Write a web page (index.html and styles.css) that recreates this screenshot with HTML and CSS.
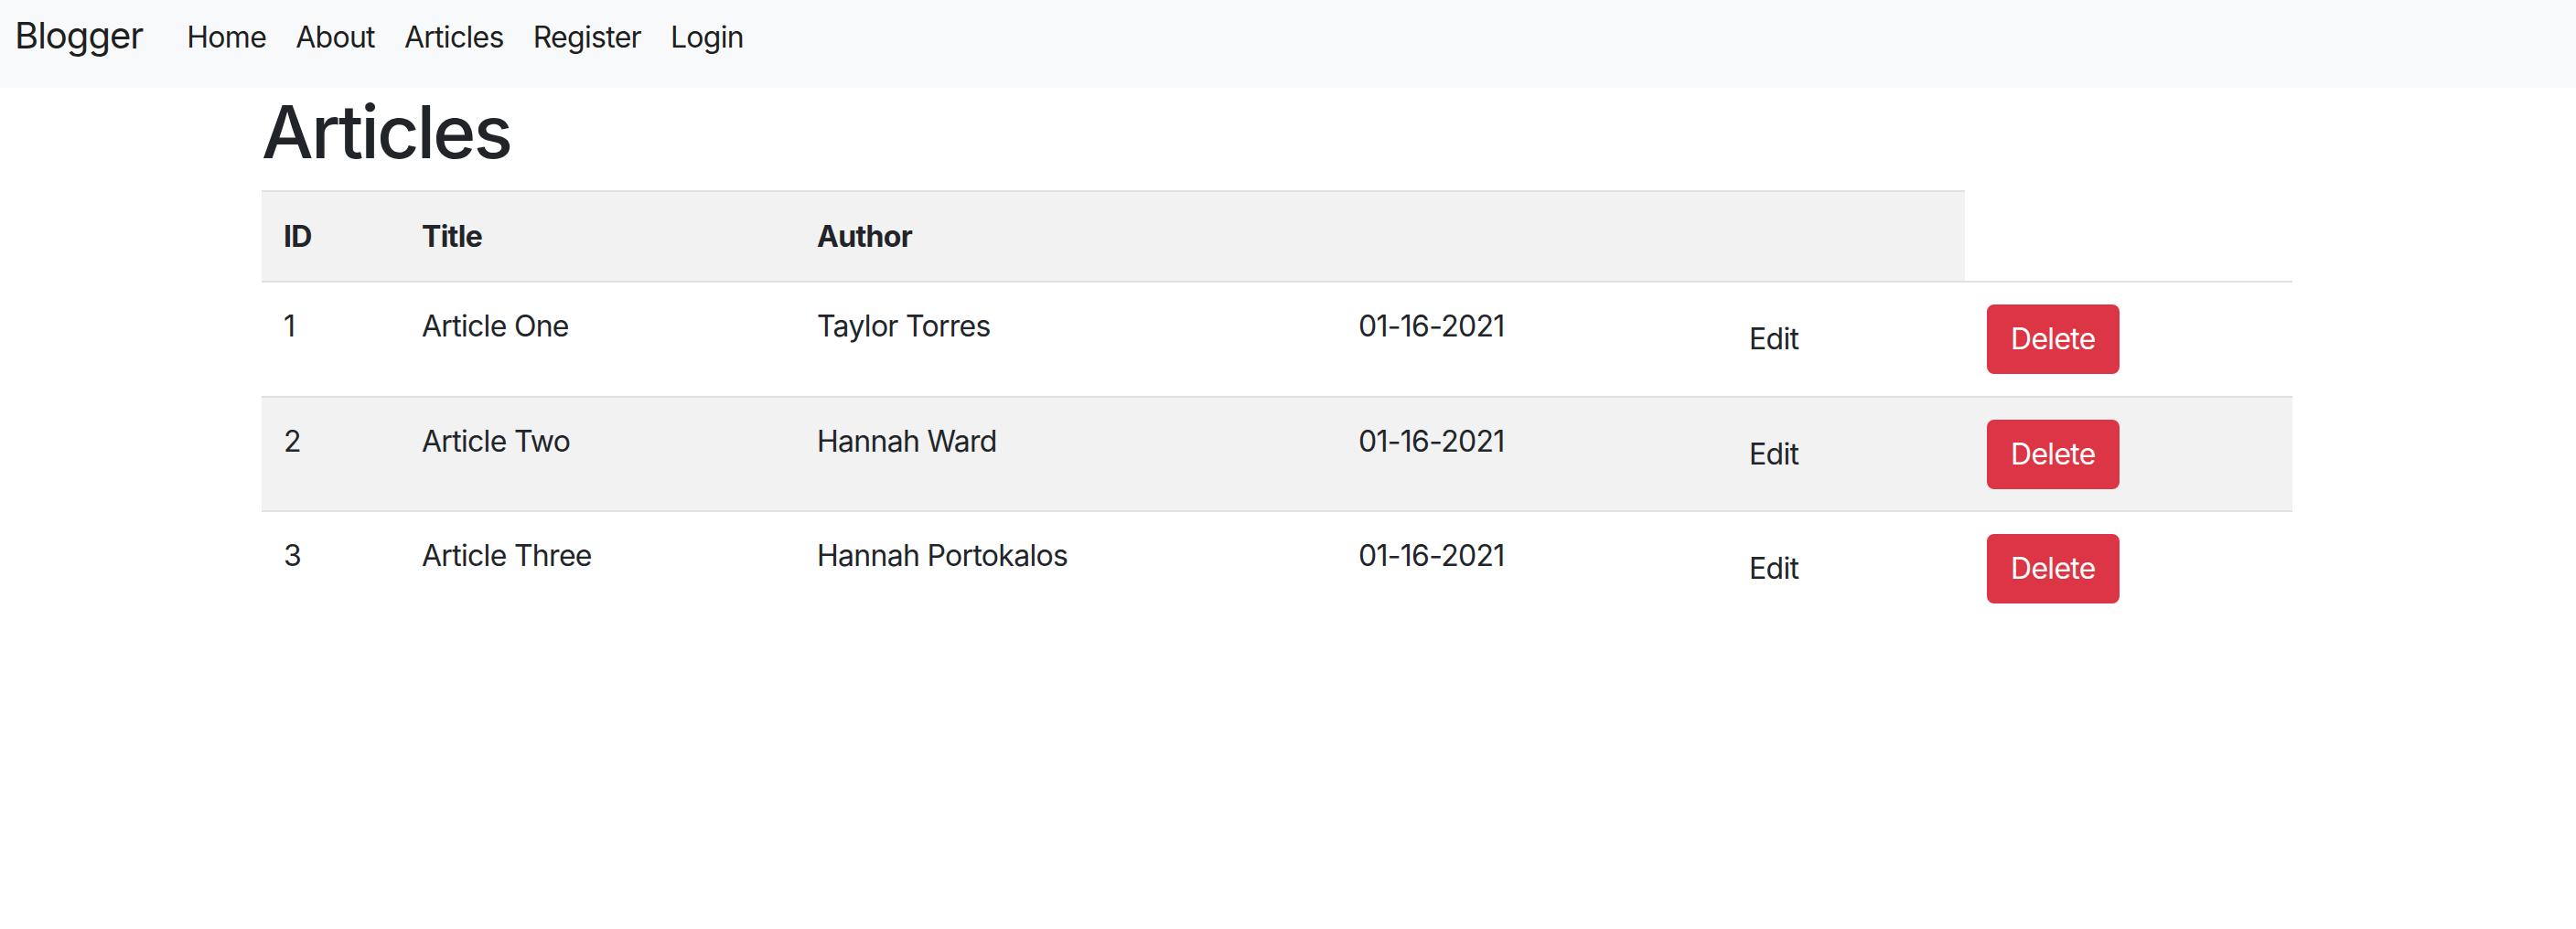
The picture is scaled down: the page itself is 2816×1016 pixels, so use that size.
FILE: index.html
```html
<!DOCTYPE html>
<html lang="en">
<head>
<meta charset="utf-8">
<title>Blogger - Articles</title>
<link rel="stylesheet" href="styles.css">
</head>
<body>
<nav class="navbar">
  <a class="brand" href="#">Blogger</a>
  <ul class="nav">
    <li><a class="nav-link" href="#">Home</a></li>
    <li><a class="nav-link" href="#">About</a></li>
    <li><a class="nav-link" href="#">Articles</a></li>
    <li><a class="nav-link" href="#">Register</a></li>
    <li><a class="nav-link" href="#">Login</a></li>
  </ul>
</nav>
<main class="container">
  <h1 class="title">Articles</h1>
  <table class="table">
    <colgroup>
      <col class="c-id">
      <col class="c-title">
      <col class="c-author">
      <col class="c-date">
      <col class="c-edit">
      <col class="c-delete">
    </colgroup>
    <tbody>
      <tr>
        <th>ID</th>
        <th>Title</th>
        <th>Author</th>
        <th></th>
        <th></th>
      </tr>
      <tr>
        <td>1</td>
        <td>Article One</td>
        <td>Taylor Torres</td>
        <td>01-16-2021</td>
        <td><a class="btn btn-plain" href="#">Edit</a></td>
        <td><button class="btn btn-danger" type="button">Delete</button></td>
      </tr>
      <tr>
        <td>2</td>
        <td>Article Two</td>
        <td>Hannah Ward</td>
        <td>01-16-2021</td>
        <td><a class="btn btn-plain" href="#">Edit</a></td>
        <td><button class="btn btn-danger" type="button">Delete</button></td>
      </tr>
      <tr>
        <td>3</td>
        <td>Article Three</td>
        <td>Hannah Portokalos</td>
        <td>01-16-2021</td>
        <td><a class="btn btn-plain" href="#">Edit</a></td>
        <td><button class="btn btn-danger" type="button">Delete</button></td>
      </tr>
    </tbody>
  </table>
</main>
</body>
</html>
```

FILE: styles.css
```css
* {
  box-sizing: border-box;
}

html, body {
  margin: 0;
  padding: 0;
  background: #ffffff;
}

body {
  font-family: Inter, "Noto Sans", "Liberation Sans", sans-serif;
  font-size: 32px;
  line-height: 48px;
  letter-spacing: -0.022em;
  color: #212529;
}

a {
  text-decoration: none;
}

/* ---------- Navbar ---------- */
.navbar {
  display: flex;
  align-items: flex-start;
  height: 96px;
  padding: 0 16px;
  background: #f8f9fa;
}

.brand {
  margin-top: 9px;
  margin-right: 32px;
  font-size: 40px;
  line-height: 60px;
  letter-spacing: -0.025em;
  color: rgba(0, 0, 0, 0.9);
}

.nav {
  display: flex;
  margin: 17px 0 0 0;
  padding: 0;
  list-style: none;
}

.nav-link {
  display: block;
  padding: 0 16px;
  font-size: 32px;
  line-height: 48px;
  color: rgba(0, 0, 0, 0.9);
}

/* ---------- Content ---------- */
.container {
  width: 2220px;
  margin: 0 0 0 286px;
}

.title {
  margin: 0 0 16px 0;
  font-size: 80px;
  line-height: 96px;
  font-weight: 500;
  letter-spacing: -0.032em;
  color: #212529;
}

.table {
  width: 100%;
  border-collapse: collapse;
  table-layout: fixed;
}

.c-id { width: 151px; }
.c-title { width: 432px; }
.c-author { width: 592px; }
.c-date { width: 401px; }
.c-edit { width: 286px; }
.c-delete { width: 358px; }

.table th,
.table td {
  padding: 24px 24px 23.6px;
  vertical-align: top;
  text-align: left;
  border-top: 2px solid #dee2e6;
  font-size: 32px;
  line-height: 48px;
}

.table th {
  padding: 25px 24px 24px;
  font-weight: 700;
}

.table tr:nth-child(odd) > th,
.table tr:nth-child(odd) > td {
  background: #f2f2f2;
}

/* ---------- Buttons ---------- */
.btn {
  display: inline-block;
  padding: 12px 24px;
  border: 2px solid transparent;
  border-radius: 8px;
  font-family: inherit;
  font-size: 32px;
  line-height: 48px;
  font-weight: 400;
  letter-spacing: -0.022em;
  cursor: pointer;
}

.btn-plain {
  color: #212529;
  background: transparent;
}

.btn-danger {
  color: #ffffff;
  background: #dc3545;
  border-color: #dc3545;
}
```
